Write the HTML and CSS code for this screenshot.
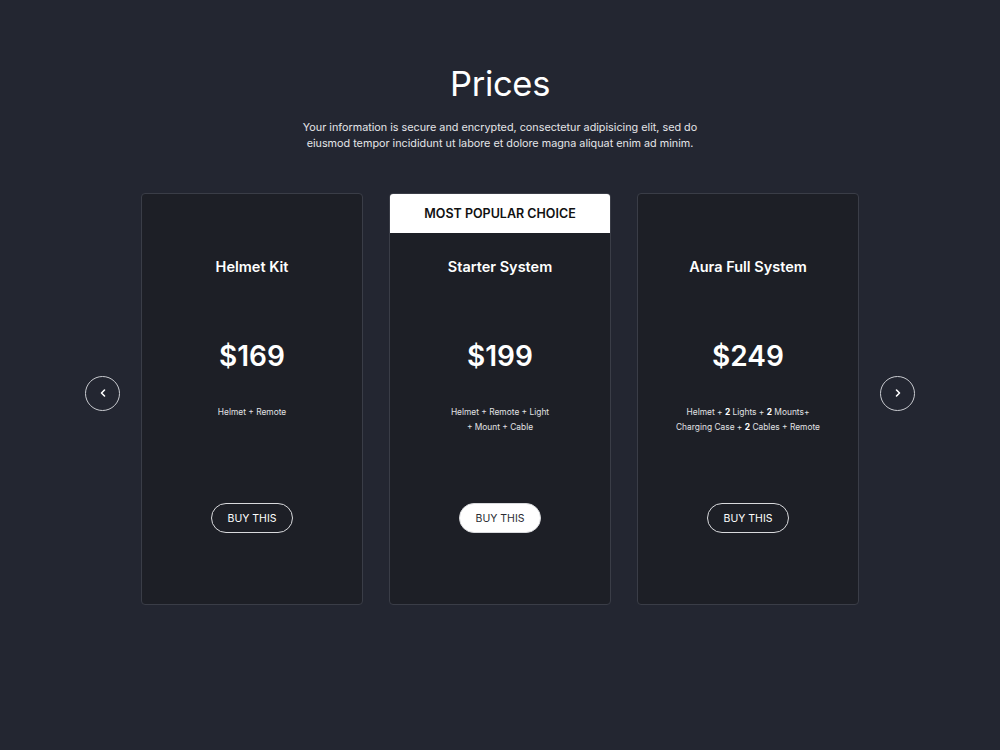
FILE: index.html
```html
<!DOCTYPE html>
<html lang="en">
<head>
<meta charset="utf-8">
<title>Prices</title>
<link rel="stylesheet" href="styles.css">
</head>
<body>
<main class="page">
  <header class="intro">
    <h1 class="title">Prices</h1>
    <p class="lead">Your information is secure and encrypted, consectetur adipisicing elit, sed do<br>eiusmod tempor incididunt ut labore et dolore magna aliquat enim ad minim.</p>
  </header>
  <section class="carousel">
    <button class="arrow" aria-label="Previous">
      <svg width="10" height="10" viewBox="0 0 10 10"><path d="M6.5 2 L3.5 5 L6.5 8" fill="none" stroke="#fff" stroke-width="1.6" stroke-linecap="round" stroke-linejoin="round"/></svg>
    </button>
    <div class="cards">
      <article class="card">
        <div class="card-top"></div>
        <h2 class="card-name">Helmet Kit</h2>
        <div class="price">$169</div>
        <p class="desc">Helmet + Remote</p>
        <a class="buy">BUY THIS</a>
      </article>
      <article class="card">
        <div class="card-top badge">MOST POPULAR CHOICE</div>
        <h2 class="card-name">Starter System</h2>
        <div class="price">$199</div>
        <p class="desc">Helmet + Remote + Light<br>+ Mount + Cable</p>
        <a class="buy buy-solid">BUY THIS</a>
      </article>
      <article class="card">
        <div class="card-top"></div>
        <h2 class="card-name">Aura Full System</h2>
        <div class="price">$249</div>
        <p class="desc">Helmet + <b>2</b> Lights + <b>2</b> Mounts+<br>Charging Case + <b>2</b> Cables + Remote</p>
        <a class="buy">BUY THIS</a>
      </article>
    </div>
    <button class="arrow" aria-label="Next">
      <svg width="10" height="10" viewBox="0 0 10 10"><path d="M3.5 2 L6.5 5 L3.5 8" fill="none" stroke="#fff" stroke-width="1.6" stroke-linecap="round" stroke-linejoin="round"/></svg>
    </button>
  </section>
</main>
</body>
</html>
```

FILE: styles.css
```css
* { box-sizing: border-box; }
html, body { margin: 0; padding: 0; }
body {
  background: #232631;
  color: #fff;
  font-family: Inter, "Noto Sans", sans-serif;
  width: 1000px;
  height: 750px;
  overflow: hidden;
}
.page {
  display: flex;
  flex-direction: column;
  align-items: center;
  padding-top: 63px;
}
.intro { text-align: center; }
.title {
  margin: 0;
  font-size: 34.5px;
  font-weight: 400;
  line-height: 42px;
  letter-spacing: -0.3px;
}
.lead {
  margin: 15px 0 0;
  font-size: 10.8px;
  line-height: 16px;
  color: #e4e5e8;
}
.carousel {
  margin-top: 41px;
  display: flex;
  align-items: center;
  gap: 21px;
}
.arrow {
  width: 35px;
  height: 35px;
  border-radius: 50%;
  border: 1px solid #c9cbd0;
  background: transparent;
  display: flex;
  align-items: center;
  justify-content: center;
  padding: 0;
  margin-bottom: 12px;
}
.cards {
  display: flex;
  gap: 26px;
}
.card {
  width: 222px;
  height: 412px;
  background: #1d1f26;
  border: 1px solid #3a3d47;
  border-radius: 4px;
  display: flex;
  flex-direction: column;
  align-items: center;
  padding-bottom: 71px;
  overflow: hidden;
}
.card-top {
  align-self: stretch;
  height: 38px;
  flex: none;
}
.badge {
  margin: -1px -1px 0;
  height: 40px;
  background: #fff;
  color: #111;
  font-size: 12.5px;
  font-weight: 600;
  display: flex;
  align-items: center;
  justify-content: center;
  border-radius: 4px 4px 0 0;
}
.badge + .card-name { margin-top: 24px; }
.card-name {
  margin: 25px 0 0;
  font-size: 14.5px;
  font-weight: 600;
  line-height: 20px;
}
.price {
  margin-top: 62px;
  font-size: 28px;
  font-weight: 600;
  line-height: 34px;
}
.desc {
  margin: 32px 0 0;
  font-size: 8.4px;
  line-height: 15px;
  text-align: center;
  color: #e0e1e4;
}
.desc b { font-weight: 700; color: #fff; }
.buy {
  margin-top: auto;
  width: 82px;
  height: 30px;
  border: 1px solid #d9dadd;
  border-radius: 15px;
  display: flex;
  align-items: center;
  justify-content: center;
  font-size: 10.5px;
  color: #fff;
}
.buy-solid {
  background: #fff;
  color: #2a2c33;
}
```
